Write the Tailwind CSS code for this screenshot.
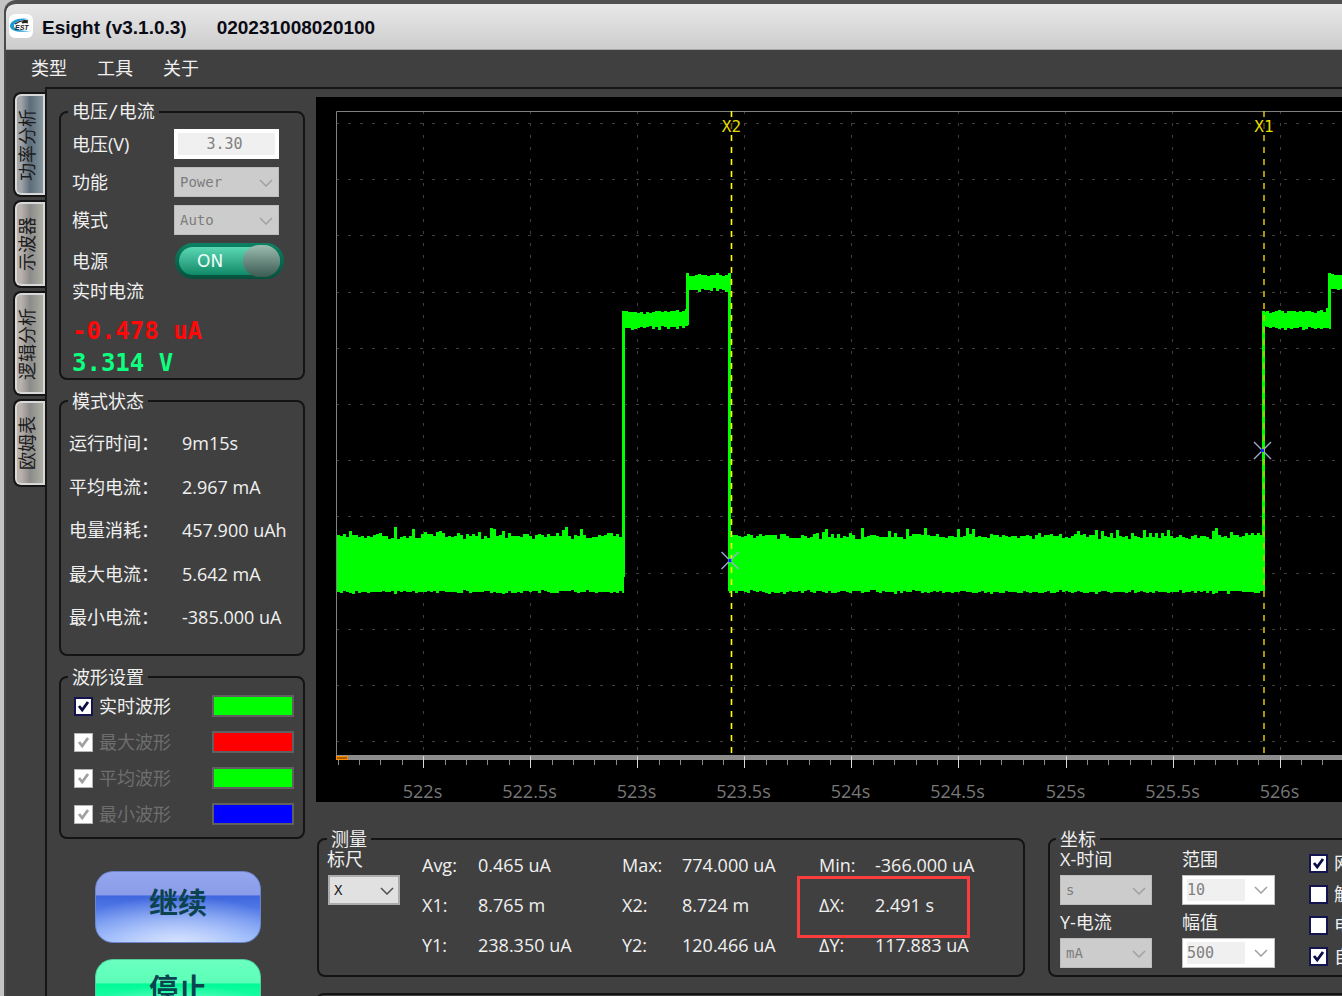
<!DOCTYPE html>
<html lang="zh">
    <head>
        <meta charset="utf-8">
        <title>Esight</title>
        <meta name="viewport" content="width=device-width, initial-scale=1.0">
        <script src="https://cdn.jsdelivr.net/npm/@tailwindcss/browser@4"></script>
    </head>
    <body class="h-screen overflow-hidden bg-[#c4c4c4] pl-1 font-['Open_Sans','Noto_Sans_CJK_SC',sans-serif] text-[18px] leading-6 text-[#f0f0f0]">
        <!-- shared icons -->
        <svg class="hidden">
            <symbol id="chevron" viewBox="0 0 14 8"><path d="M1 1l6 6 6-6" fill="none" stroke="currentColor" stroke-width="1.5"/></symbol>
            <symbol id="tick" viewBox="0 0 15 15"><path d="M3 7l3.2 4 5.8-8" fill="none" stroke="currentColor" stroke-width="2.8"/></symbol>
        </svg>

        <div class="flex h-full flex-col overflow-hidden rounded-tl-xl border-t-4 border-l-2 border-t-[#505050] border-l-[#4a4a4a] bg-[#404040]">
            <header class="flex h-[46px] shrink-0 items-center rounded-tl-lg border-b border-[#a8a8a8] bg-linear-to-b from-[#e8e8e8] to-[#cdcdcd] pt-[2px] pl-[3px] font-['Liberation_Sans',sans-serif] text-[19px] font-bold text-[#0a0a14]">
                <svg class="mb-1 size-6 shrink-0" viewBox="0 0 24 24">
                    <rect width="24" height="24" rx="6" fill="#fff"/>
                    <path d="M20 5C9 3 1 7 1 12c0 5 9 7 21 5-9 0-17-1-17-5 0-4 6-6 15-7z" fill="#1c9ad6"/>
                    <path d="M6 10c4-3 9-4 13-3-3 0-5 1-6 2 3-1 4-1 6 0" fill="none" stroke="#222" stroke-width="1.3"/>
                    <text x="6" y="16" font-size="7" font-weight="bold" font-style="italic" fill="#222">EST</text>
                </svg>
                <h1 class="ml-[9px] whitespace-pre">Esight (v3.1.0.3)</h1>
                <span class="ml-[30px]">020231008020100</span>
            </header>

            <nav class="flex h-[37px] shrink-0 items-center gap-[30px] pb-[2px] pl-[25px]">
                <button>类型</button>
                <button>工具</button>
                <button>关于</button>
            </nav>

            <div class="flex min-h-0 flex-1">
                <div role="tablist" class="flex w-[39px] shrink-0 flex-col gap-[3px] pt-[5px] pl-[7px] text-[18px] text-[#1c1c1c]">
                    <button role="tab" aria-selected="true" class="flex h-[105px] items-center justify-center rounded-l-lg border-2 border-r-0 border-[#151515] bg-linear-to-r from-[#a3a6a8] from-20% via-[#5d6c7a] via-50% to-[#8d9ea2] pr-[6px] shadow-[inset_0_0_0_2px_#d8d8d8]"><span class="rotate-180 [writing-mode:vertical-rl] [text-orientation:sideways]">功率分析</span></button>
                    <button role="tab" class="flex h-[88px] items-center justify-center rounded-l-lg border-2 border-r-0 border-[#151515] bg-linear-to-r from-[#bab2ac] from-20% via-[#8b8b8b] via-50% to-[#b4b4a6] pr-[6px] shadow-[inset_0_0_0_2px_#d8d8d8]"><span class="rotate-180 [writing-mode:vertical-rl] [text-orientation:sideways]">示波器</span></button>
                    <button role="tab" class="flex h-[105px] items-center justify-center rounded-l-lg border-2 border-r-0 border-[#151515] bg-linear-to-r from-[#bab2ac] from-20% via-[#8b8b8b] via-50% to-[#b4b4a6] pr-[6px] shadow-[inset_0_0_0_2px_#d8d8d8]"><span class="rotate-180 [writing-mode:vertical-rl] [text-orientation:sideways]">逻辑分析</span></button>
                    <button role="tab" class="flex h-[88px] items-center justify-center rounded-l-lg border-2 border-r-0 border-[#151515] bg-linear-to-r from-[#bab2ac] from-20% via-[#8b8b8b] via-50% to-[#b4b4a6] pr-[6px] shadow-[inset_0_0_0_2px_#d8d8d8]"><span class="rotate-180 [writing-mode:vertical-rl] [text-orientation:sideways]">欧姆表</span></button>
                </div>

                <div class="flex min-w-0 flex-1 border-t-2 border-l-2 border-[#161616]">
                    <!-- left column -->
                    <aside class="flex w-[258px] shrink-0 flex-col gap-[11px] pt-[13px] pl-3">
                        <fieldset class="h-[278px] shrink-0 rounded-lg border-2 border-[#141414] pr-4 pl-[11px]">
                            <legend class="-ml-1 px-1 font-['DejaVu_Sans_Mono','Noto_Sans_CJK_SC',monospace] leading-5">电压/电流</legend>
                            <div class="flex flex-col gap-2 pt-[7px]">
                                <div class="flex items-center justify-between">
                                    <label for="volt">电压(V)</label>
                                    <input id="volt" disabled value="3.30" class="mr-2 h-[30px] w-[105px] border-4 border-white bg-[#f0f0f0] pr-1 text-center font-['DejaVu_Sans_Mono',monospace] text-[15px] text-[#808080]">
                                </div>
                                <div class="flex items-center justify-between">
                                    <label for="func">功能</label>
                                    <div class="relative mr-2">
                                        <select id="func" disabled class="block h-[30px] w-[105px] appearance-none border border-[#bcbcbc] bg-[#cccccc] px-[5px] font-['DejaVu_Sans_Mono',monospace] text-[14px] text-[#7c7c7c] opacity-100"><option>Power</option></select>
                                        <svg class="absolute top-3 right-[6px] h-2 w-[14px] text-[#a0a0a0]"><use href="#chevron"/></svg>
                                    </div>
                                </div>
                                <div class="flex items-center justify-between">
                                    <label for="mode">模式</label>
                                    <div class="relative mr-2">
                                        <select id="mode" disabled class="block h-[30px] w-[105px] appearance-none border border-[#bcbcbc] bg-[#cccccc] px-[5px] font-['DejaVu_Sans_Mono',monospace] text-[14px] text-[#7c7c7c] opacity-100"><option>Auto</option></select>
                                        <svg class="absolute top-3 right-[6px] h-2 w-[14px] text-[#a0a0a0]"><use href="#chevron"/></svg>
                                    </div>
                                </div>
                            </div>
                            <div class="mt-2 flex items-center justify-between">
                                <label for="power">电源</label>
                                <button id="power" role="switch" aria-checked="true" class="mr-[3px] flex h-9 w-[109px] items-center rounded-full bg-linear-to-b from-[#0c8263] to-[#06503d] p-1">
                                    <span class="flex h-7 flex-1 items-center justify-between rounded-full bg-linear-to-b from-[#5ad8b4] to-[#0b8a68] pl-[18px]">
                                        <span class="font-['DejaVu_Sans',sans-serif] text-[17px] text-[#eafff8]">ON</span>
                                        <span class="h-8 w-[37px] rounded-full bg-linear-to-b from-[#9dbdb3] to-[#3c5b52]"></span>
                                    </span>
                                </button>
                            </div>
                            <div>实时电流</div>
                            <div class="mt-3 font-['DejaVu_Sans_Mono',monospace] text-[24px] leading-8 font-bold">
                                <div class="text-[#ff0808]">-0.478 uA</div>
                                <div class="text-[#0dff7f]">3.314 V</div>
                            </div>
                        </fieldset>

                        <fieldset class="h-[265px] shrink-0 rounded-lg border-2 border-[#141414] pl-2">
                            <legend class="-ml-px px-1 leading-5">模式状态</legend>
                            <dl class="mt-5 grid h-[198px] grid-cols-[113px_1fr] content-between whitespace-nowrap">
                                <dt>运行时间：</dt><dd>9m15s</dd>
                                <dt>平均电流：</dt><dd>2.967 mA</dd>
                                <dt>电量消耗：</dt><dd>457.900 uAh</dd>
                                <dt>最大电流：</dt><dd>5.642 mA</dd>
                                <dt>最小电流：</dt><dd>-385.000 uA</dd>
                            </dl>
                        </fieldset>

                        <fieldset class="h-[172px] shrink-0 rounded-lg border-2 border-[#141414] pr-[9px] pl-[13px]">
                            <legend class="-ml-[6px] px-1 leading-5">波形设置</legend>
                            <div class="flex flex-col gap-3 pt-[7px]">
                                <div class="flex items-center justify-between">
                                    <label class="flex items-center gap-[6px]"><span class="relative size-[19px]"><input type="checkbox" checked class="block size-[19px] appearance-none border-2 border-[#141450] bg-white"><svg class="pointer-events-none absolute inset-[2px] size-[15px] text-[#0a0a46]"><use href="#tick"/></svg></span>实时波形</label>
                                    <span class="h-[22px] w-[82px] border-2 border-[#606060] bg-[#00ff00]"></span>
                                </div>
                                <div class="flex items-center justify-between text-[#6e6e6e]">
                                    <label class="flex items-center gap-[6px]"><span class="relative size-[19px]"><input type="checkbox" checked disabled class="block size-[19px] appearance-none border border-[#b4b4b4] bg-white"><svg class="pointer-events-none absolute inset-[2px] size-[15px] text-[#a0a0a0]"><use href="#tick"/></svg></span>最大波形</label>
                                    <span class="h-[22px] w-[82px] border-2 border-[#606060] bg-[#ff0000]"></span>
                                </div>
                                <div class="flex items-center justify-between text-[#6e6e6e]">
                                    <label class="flex items-center gap-[6px]"><span class="relative size-[19px]"><input type="checkbox" checked disabled class="block size-[19px] appearance-none border border-[#b4b4b4] bg-white"><svg class="pointer-events-none absolute inset-[2px] size-[15px] text-[#a0a0a0]"><use href="#tick"/></svg></span>平均波形</label>
                                    <span class="h-[22px] w-[82px] border-2 border-[#606060] bg-[#00ff00]"></span>
                                </div>
                                <div class="flex items-center justify-between text-[#6e6e6e]">
                                    <label class="flex items-center gap-[6px]"><span class="relative size-[19px]"><input type="checkbox" checked disabled class="block size-[19px] appearance-none border border-[#b4b4b4] bg-white"><svg class="pointer-events-none absolute inset-[2px] size-[15px] text-[#a0a0a0]"><use href="#tick"/></svg></span>最小波形</label>
                                    <span class="h-[22px] w-[82px] border-2 border-[#606060] bg-[#0000ff]"></span>
                                </div>
                            </div>
                        </fieldset>

                        <div class="mt-[21px] ml-9 flex w-[166px] flex-col gap-4 text-[29px] font-bold text-[#0b4450]">
                            <button class="h-[72px] shrink-0 overflow-hidden rounded-[18px] border border-[#6b84cc] bg-[linear-gradient(#96a6f0,#8a9ce8_33%,transparent_34%),radial-gradient(ellipse_75%_70%_at_50%_105%,#dbe6ff,transparent),linear-gradient(#3f66de_34%,#7fa8fb)] pb-2">继续</button>
                            <button class="h-[72px] shrink-0 overflow-hidden rounded-[18px] border border-[#4fd09a] bg-[linear-gradient(#6affc0,#5cffb8_33%,transparent_34%),radial-gradient(ellipse_75%_70%_at_50%_105%,#dbfff0,transparent),linear-gradient(#00fa96_34%,#5cffc0)] pb-3">停止</button>
                        </div>
                    </aside>

                    <!-- right column -->
                    <main class="flex min-w-0 flex-1 flex-col pt-2 pl-[11px]">
                        <svg id="chart" class="h-[705px] w-full shrink-0 bg-black"></svg>

                        <div class="mt-[27px] flex shrink-0 gap-[23px] overflow-hidden pl-px">
                            <fieldset class="relative h-[148px] w-[708px] shrink-0 rounded-lg border-2 border-[#141414] pl-2">
                                <legend class="px-1 leading-5">测量</legend>
                                <div class="flex">
                                    <div class="w-[95px]">
                                        <label for="ruler" class="mb-[6px] block leading-5">标尺</label>
                                        <div class="relative ml-px w-[72px]">
                                            <select id="ruler" class="block h-[30px] w-[72px] appearance-none border-2 border-[#adadad] bg-[#e1e1e1] px-1 font-['DejaVu_Sans_Mono',monospace] text-[14px] text-[#202020]"><option>X</option></select>
                                            <svg class="absolute top-3 right-[6px] h-2 w-[14px] text-[#505050]"><use href="#chevron"/></svg>
                                        </div>
                                    </div>
                                    <dl class="grid grid-cols-[56px_144px_60px_137px_56px_auto] content-start gap-y-4 pt-1 whitespace-nowrap">
                                        <dt>Avg:</dt><dd>0.465 uA</dd><dt>Max:</dt><dd>774.000 uA</dd><dt>Min:</dt><dd>-366.000 uA</dd>
                                        <dt>X1:</dt><dd>8.765 m</dd><dt>X2:</dt><dd>8.724 m</dd><dt>ΔX:</dt><dd>2.491 s</dd>
                                        <dt>Y1:</dt><dd>238.350 uA</dd><dt>Y2:</dt><dd>120.466 uA</dd><dt>ΔY:</dt><dd>117.883 uA</dd>
                                    </dl>
                                </div>
                                <!-- highlight over the delta X reading -->
                                <div class="absolute top-[27px] left-[478px] h-[62px] w-[173px] border-3 border-[#fa3c3c]"></div>
                            </fieldset>

                            <fieldset class="h-[148px] min-w-[420px] flex-1 rounded-lg border-2 border-[#141414] pl-[10px]">
                                <legend class="-ml-1 px-1 leading-5">坐标</legend>
                                <div class="flex whitespace-nowrap">
                                    <div class="w-[122px]">
                                        <label for="xunit" class="mb-[6px] block leading-5">X-时间</label>
                                        <div class="relative mb-[7px] w-[92px]">
                                            <select id="xunit" disabled class="block h-[30px] w-[92px] appearance-none border border-[#bcbcbc] bg-[#cccccc] px-[5px] font-['DejaVu_Sans_Mono',monospace] text-[14px] text-[#7c7c7c] opacity-100"><option>s</option></select>
                                            <svg class="absolute top-3 right-[6px] h-2 w-[14px] text-[#a0a0a0]"><use href="#chevron"/></svg>
                                        </div>
                                        <label for="yunit" class="mb-[6px] block leading-5">Y-电流</label>
                                        <div class="relative w-[92px]">
                                            <select id="yunit" disabled class="block h-[30px] w-[92px] appearance-none border border-[#bcbcbc] bg-[#cccccc] px-[5px] font-['DejaVu_Sans_Mono',monospace] text-[14px] text-[#7c7c7c] opacity-100"><option>mA</option></select>
                                            <svg class="absolute top-3 right-[6px] h-2 w-[14px] text-[#a0a0a0]"><use href="#chevron"/></svg>
                                        </div>
                                    </div>
                                    <div class="w-[127px]">
                                        <label for="range" class="mb-[6px] block leading-5">范围</label>
                                        <div class="mb-[7px] flex h-[30px] w-[93px] items-center justify-between border border-[#c0c0c0] bg-white pr-[6px] pl-1">
                                            <input id="range" disabled value="10" class="h-[22px] w-[58px] bg-[#f0f0f0] font-['DejaVu_Sans_Mono',monospace] text-[15px] text-[#808080]">
                                            <svg class="h-2 w-[14px] text-[#a0a0a0]"><use href="#chevron"/></svg>
                                        </div>
                                        <label for="amp" class="mb-[6px] block leading-5">幅值</label>
                                        <div class="flex h-[30px] w-[93px] items-center justify-between border border-[#c0c0c0] bg-white pr-[6px] pl-1">
                                            <input id="amp" disabled value="500" class="h-[22px] w-[58px] bg-[#f0f0f0] font-['DejaVu_Sans_Mono',monospace] text-[15px] text-[#808080]">
                                            <svg class="h-2 w-[14px] text-[#a0a0a0]"><use href="#chevron"/></svg>
                                        </div>
                                    </div>
                                    <div class="flex flex-col gap-[7px] pt-[2px]">
                                        <label class="flex items-center gap-[6px]"><span class="relative size-[19px]"><input type="checkbox" checked class="block size-[19px] appearance-none border-2 border-[#141450] bg-white"><svg class="pointer-events-none absolute inset-[2px] size-[15px] text-[#0a0a46]"><use href="#tick"/></svg></span>网格</label>
                                        <label class="flex items-center gap-[6px]"><input type="checkbox" class="block size-[19px] appearance-none border-2 border-[#141450] bg-white">触发</label>
                                        <label class="flex items-center gap-[6px]"><input type="checkbox" class="block size-[19px] appearance-none border-2 border-[#141450] bg-white">电流</label>
                                        <label class="flex items-center gap-[6px]"><span class="relative size-[19px]"><input type="checkbox" checked class="block size-[19px] appearance-none border-2 border-[#141450] bg-white"><svg class="pointer-events-none absolute inset-[2px] size-[15px] text-[#0a0a46]"><use href="#tick"/></svg></span>自动</label>
                                    </div>
                                </div>
                            </fieldset>
                        </div>

                        <div class="mt-4 h-10 shrink-0 rounded-tl-lg border-t-2 border-l-2 border-[#141414]"></div>
                    </main>
                </div>
            </div>
        </div>

        <script>
            const chart = document.getElementById("chart");
            const END = chart.clientWidth;
            let seed = 7;
            function rnd() {
                seed = (seed * 16807) % 2147483647;
                return seed / 2147483647;
            }
            // one noisy block between x0 and x1
            function band(x0, x1, top, bottom, up, down) {
                let upper = "", lower = "";
                for (let x = x0; x < x1; x += 3) {
                    let n = Math.min(x + 3, x1);
                    let spike = rnd() > 0.9 ? up * 0.7 : 0;
                    let a = top - Math.round((rnd() + rnd() - 1) * up * 0.5 + spike);
                    let b = bottom + Math.round((rnd() + rnd() - 1) * down);
                    upper += "L" + x + " " + a + "L" + n + " " + a;
                    lower = "L" + n + " " + b + "L" + x + " " + b + lower;
                }
                return "M" + upper.slice(1) + lower + "Z";
            }
            let s = "";
            for (let i = 0; i < 12; i++) {
                let p = Math.round(26 + i * 56.2) + 0.5;
                s += `<path d="M20 ${p}H${END}" stroke="#404040" stroke-dasharray="3 9"/>`;
            }
            for (let i = 0; 107 + i * 107 < END; i++) {
                let p = Math.floor(107.6 + i * 107.05) + 0.5;
                s += `<path d="M${p} 14V658" stroke="#404040" stroke-dasharray="3 9"/>`;
            }
            s += `<path d="M20.5 658V14.5H${END}" fill="none" stroke="#808080"/>`;

            let d = band(21, 308, 439, 495, 8, 2) + band(306, 372, 215, 231, 4, 3) + band(370, 415, 178, 193, 4, 2)
                + band(413, 949, 439, 495, 8, 2) + band(947, 1015, 215, 231, 4, 3) + band(1012, 1060, 178, 193, 4, 2)
                + "M306 214h3V480h-3zM370 176h3V228h-3zM412 176h3V494h-3zM946 214h3V494h-3zM1012 176h3V228h-3z";
            s += `<path d="${d}" fill="#00ff00" shape-rendering="crispEdges"/>`;

            // time axis
            s += `<rect x="20" y="658" width="${END}" height="5" fill="#8c8c8c"/>`;
            for (let i = -4; 107 + i * 21.41 < END; i++) {
                let p = Math.round(107.2 + i * 21.41) + 0.5;
                let major = i % 5 == 0;
                s += `<path d="M${p} 659V${major ? 671 : 668}" stroke="${major ? "#d8d8d8" : "#8a8a8a"}"/>`;
                if (major) {
                    s += `<text x="${p - 1}" y="701" text-anchor="middle" font-size="18" fill="#787878">${522 + i / 10}s</text>`;
                }
            }
            s += `<rect x="20.5" y="659.5" width="11" height="3" fill="#a85a00" stroke="#ff8c00"/>`;

            // cursors
            function cursor(x, y, name, color) {
                return `<path d="M${x} 14V656" stroke="${color}" stroke-width="1.6" stroke-dasharray="6 6"/>
                    <rect x="${x - 9}" y="21" width="20" height="16" fill="#000" fill-opacity="0.6"/>
                    <text x="${x}" y="35" text-anchor="middle" font-size="16" font-family="DejaVu Sans Mono" fill="#e6dc00">${name}</text>
                    <path d="M${x - 10} ${y - 9}l17 17m0 -17l-17 17" stroke="#a0a8d0" stroke-width="1.4"/>
                    <rect x="${x - 3}" y="${y - 2}" width="3" height="3" fill="#1428ff"/>`;
            }
            s += cursor(415.5, 464, "X2", "#ffff00");
            s += cursor(948, 354, "X1", "#d2be00");
            chart.innerHTML = s;
        </script>
    </body>
</html>
